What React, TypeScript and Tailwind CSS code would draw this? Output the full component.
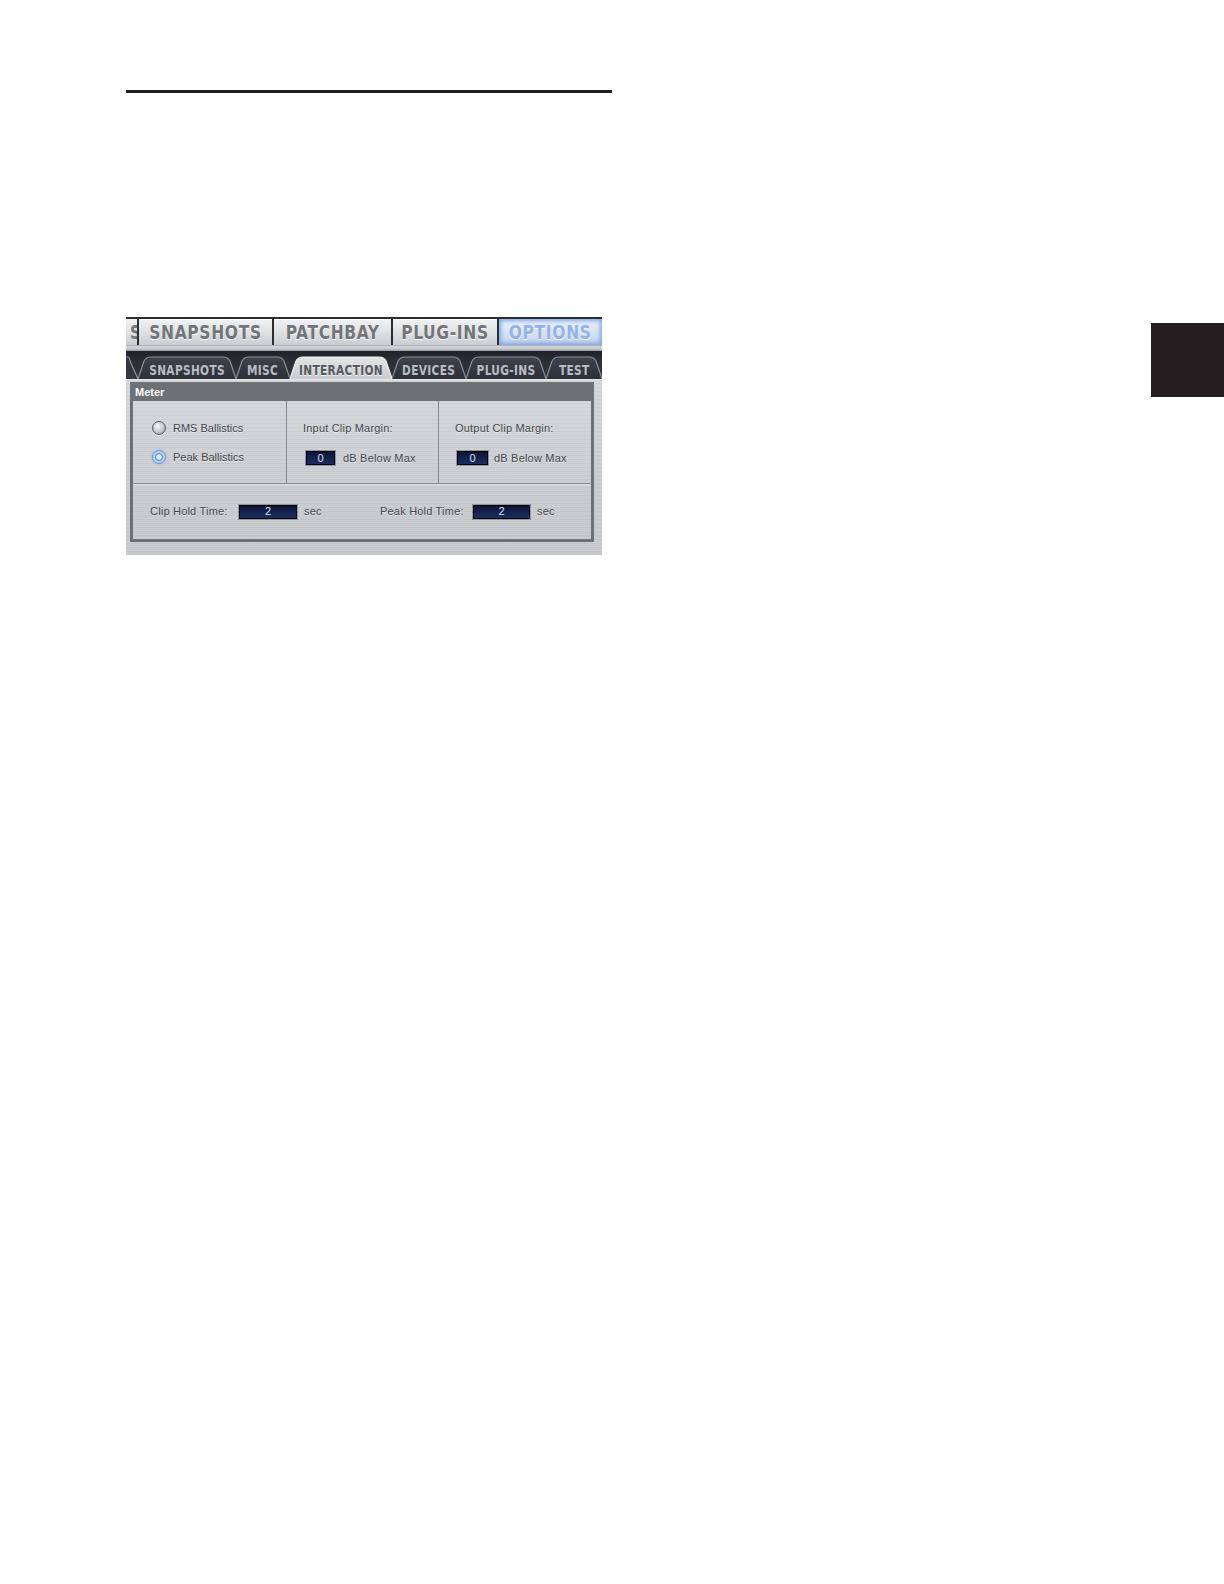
import React from "react";

const cond = "font-['DejaVu_Sans_Condensed','DejaVu_Sans','Liberation_Sans_Narrow',sans-serif] font-bold";
const sans = "font-['Liberation_Sans','Arial',sans-serif]";

function TopTab({ w, label, active }: { w: string; label: string; active?: boolean }) {
  if (active) {
    return (
      <div className={`${w} h-[26px] flex items-center justify-center overflow-hidden bg-[image:linear-gradient(180deg,#eef3fb_0%,#d6e1f3_55%,#c3d2ec_100%)] shadow-[inset_0_0_4px_2px_#7fa6e8]`}>
        <span className={`inline-block scale-x-[0.86] ${cond} text-[20px] leading-none tracking-[0.8px] text-[#93b3e4] [text-shadow:0_1px_0_#f4f8ff] whitespace-nowrap`}>
          {label}
        </span>
      </div>
    );
  }
  return (
    <div className={`${w} h-[26px] flex items-center justify-center overflow-hidden bg-[image:linear-gradient(180deg,#f1f2f3_0%,#e0e1e3_50%,#cbcdd0_100%)] shadow-[inset_0_1px_0_#ffffff]`}>
      <span className={`inline-block scale-x-[0.86] ${cond} text-[20px] leading-none tracking-[0.8px] text-[#727579] [text-shadow:0_1px_0_#ffffff] whitespace-nowrap`}>
        {label}
      </span>
    </div>
  );
}

function SubTab({ w, label, active }: { w: number; label: string; active?: boolean }) {
  const h = 23;
  const s = 9;
  const d = `M0,${h} L${s - 3},5 Q${s - 1},1 ${s + 4},1 L${w - s - 4},1 Q${w - s + 1},1 ${w - s + 3},5 L${w},${h}`;
  return (
    <div className="relative h-[23px] flex items-center justify-center" style={{ width: w }}>
      <svg className="absolute inset-0" width={w} height={h} viewBox={`0 0 ${w} ${h}`}>
        <defs>
          <linearGradient id="act" x1="0" y1="0" x2="0" y2="1">
            <stop offset="0" stopColor="#e4e5e7" />
            <stop offset="1" stopColor="#c9cbce" />
          </linearGradient>
          <linearGradient id="ina" x1="0" y1="0" x2="0" y2="1">
            <stop offset="0" stopColor="#3e434c" />
            <stop offset="1" stopColor="#2c3038" />
          </linearGradient>
        </defs>
        <path d={d + " Z"} fill={active ? "url(#act)" : "url(#ina)"} />
        <path d={d} fill="none" stroke={active ? "#f2f3f4" : "#8a8f98"} strokeWidth="1.2" />
      </svg>
      <span
        className={`relative inline-block pt-[4px] scale-x-[0.84] whitespace-nowrap ${cond} text-[14px] leading-none tracking-[0.4px] ${
          active ? "text-[#55585d] [text-shadow:0_1px_0_#f0f0f0]" : "text-[#b9bdc5]"
        }`}
      >
        {label}
      </span>
    </div>
  );
}

function PartialTab() {
  return (
    <div className="relative h-[23px] w-[12px]">
      <svg className="absolute inset-0" width={12} height={23} viewBox="0 0 12 23">
        <path d="M-1,1 L2,1 Q3.5,1 4,5 L12,23 L-1,23 Z" fill="#343841" />
        <path d="M-1,1 L2,1 Q3.5,1 4,5 L12,23" fill="none" stroke="#8a8f98" strokeWidth="1.2" />
      </svg>
    </div>
  );
}

function ValueBox({ w, value }: { w: string; value: string }) {
  return (
    <div
      className={`${w} h-[16px] flex items-center justify-center border border-[#8c95ab] bg-[image:linear-gradient(180deg,#0a1230_0%,#17244f_55%,#1d2d60_100%)] shadow-[inset_0_0_0_1px_#000000] ${sans} text-[11px] leading-none text-[#dbe2f4]`}
    >
      {value}
    </div>
  );
}

function Label({ children, className = "" }: { children: React.ReactNode; className?: string }) {
  return (
    <span className={`${sans} text-[11px] leading-none tracking-[0.2px] text-[#43464b] [text-shadow:0_1px_0_rgba(255,255,255,0.5)] whitespace-nowrap ${className}`}>
      {children}
    </span>
  );
}

const metal =
  "bg-[image:repeating-linear-gradient(0deg,rgba(255,255,255,0.10)_0px,rgba(255,255,255,0.10)_1px,transparent_1px,transparent_3px,rgba(0,0,0,0.025)_3px,rgba(0,0,0,0.025)_4px),linear-gradient(180deg,#d4d6d9_0%,#cbcdd0_50%,#c6c8cb_100%)]";

export default function App() {
  return (
    <div className="flex w-[1224px] h-[1584px] bg-white">
      <div className="flex flex-col pl-[126px] pt-[90px] w-[612px] shrink-0">
        <div className="h-[3px] w-[486px] bg-[#231f20]" />

        <div className="mt-[224px] w-[476px] h-[238px] flex flex-col bg-[#c4c6c9]">
          {/* top tab row */}
          <div className="h-[28px] pt-[2px] flex gap-[2px] bg-[#2a2d31]">
            <div className="w-[11px] h-[26px] flex items-center justify-end overflow-hidden bg-[image:linear-gradient(180deg,#f1f2f3_0%,#e0e1e3_50%,#cbcdd0_100%)]">
              <span className={`inline-block scale-x-[0.86] ${cond} text-[20px] leading-none text-[#727579] -mr-[5px]`}>S</span>
            </div>
            <TopTab w="w-[133px]" label="SNAPSHOTS" />
            <TopTab w="w-[117px]" label="PATCHBAY" />
            <TopTab w="w-[104px]" label="PLUG-INS" />
            <TopTab w="w-[103px]" label="OPTIONS" active />
          </div>

          {/* separator strip */}
          <div className="h-[6px] bg-[image:linear-gradient(180deg,#9c9fa3_0%,#d2d4d7_25%,#c3c5c8_70%,#8e9195_100%)]" />

          {/* sub tabs */}
          <div className="h-[29px] flex items-end bg-[image:linear-gradient(180deg,#1f2228_0%,#2b2f36_40%,#30343b_100%)]">
            <PartialTab />
            <SubTab w={98} label="SNAPSHOTS" />
            <SubTab w={54} label="MISC" />
            <SubTab w={102} label="INTERACTION" active />
            <SubTab w={74} label="DEVICES" />
            <SubTab w={80} label="PLUG-INS" />
            <SubTab w={56} label="TEST" />
          </div>

          {/* body */}
          <div className={`flex-1 pt-[2px] pl-[4px] pr-[8px] pb-[13px] ${metal} border-t border-[#e6e7e9]`}>
            <div className="h-[160px] flex flex-col bg-[#6d7075] px-[3px] pb-[3px]">
              <div className={`h-[19px] flex items-center pl-[2px] pt-[2px] ${sans} font-bold text-[11px] leading-none text-white`}>
                Meter
              </div>
              <div className={`flex-1 flex flex-col ${metal}`}>
                <div className="h-[83px] flex border-b border-[#84878c] shadow-[0_1px_0_#e2e3e5]">
                  {/* col 1 */}
                  <div className="w-[154px] border-r border-[#86898e] flex flex-col pt-[20px] pl-[19px] gap-[15px]">
                    <div className="h-[14px] flex items-center gap-[7px]">
                      <div className="w-[14px] h-[14px] rounded-full border border-[#55585d] bg-[radial-gradient(circle_at_40%_35%,#f6f7f8_0%,#c4c6c9_55%,#8d9094_100%)] shadow-[0_1px_0_rgba(255,255,255,0.6)]" />
                      <Label className="text-[10px] tracking-[0px]">RMS Ballistics</Label>
                    </div>
                    <div className="h-[14px] flex items-center gap-[7px]">
                      <div className="w-[14px] h-[14px] rounded-full border border-[#6b9bd8] bg-[#b7cfee] flex items-center justify-center shadow-[0_0_2px_#8fb6ea]">
                        <div className="w-[8px] h-[8px] rounded-full border border-[#4d87d2] bg-[#d9e7f7]" />
                      </div>
                      <Label className="text-[10px] tracking-[0px]">Peak Ballistics</Label>
                    </div>
                  </div>
                  {/* col 2 */}
                  <div className="w-[152px] border-r border-[#86898e] flex flex-col pt-[20px] pl-[16px] gap-[15px]">
                    <div className="h-[14px] flex items-center">
                      <Label>Input Clip Margin:</Label>
                    </div>
                    <div className="h-[16px] flex items-center gap-[7px] pl-[2px]">
                      <ValueBox w="w-[31px]" value="0" />
                      <Label>dB Below Max</Label>
                    </div>
                  </div>
                  {/* col 3 */}
                  <div className="flex-1 flex flex-col pt-[20px] pl-[16px] gap-[15px]">
                    <div className="h-[14px] flex items-center">
                      <Label>Output Clip Margin:</Label>
                    </div>
                    <div className="h-[16px] flex items-center gap-[5px] pl-[1px]">
                      <ValueBox w="w-[33px]" value="0" />
                      <Label>dB Below Max</Label>
                    </div>
                  </div>
                </div>
                {/* bottom row */}
                <div className="flex-1 flex items-center pl-[17px]">
                  <Label className="w-[88px]">Clip Hold Time:</Label>
                  <ValueBox w="w-[60px]" value="2" />
                  <Label className="w-[82px] pl-[6px]">sec</Label>
                  <Label className="w-[92px]">Peak Hold Time:</Label>
                  <ValueBox w="w-[59px]" value="2" />
                  <Label className="pl-[6px]">sec</Label>
                </div>
              </div>
            </div>
          </div>
        </div>
      </div>
      <div className="ml-auto mt-[323px] w-[73px] h-[74px] bg-[#231f20]" />
    </div>
  );
}
